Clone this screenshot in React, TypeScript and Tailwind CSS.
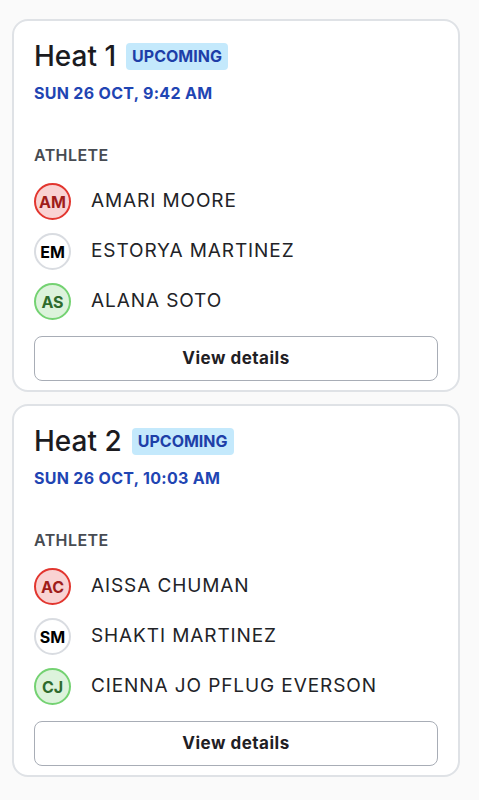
type Tone = "red" | "plain" | "green";

type Athlete = { initials: string; name: string; tone: Tone };

type Heat = { title: string; date: string; athletes: Athlete[] };

const heats: Heat[] = [
  {
    title: "Heat 1",
    date: "SUN 26 OCT, 9:42 AM",
    athletes: [
      { initials: "AM", name: "AMARI MOORE", tone: "red" },
      { initials: "EM", name: "ESTORYA MARTINEZ", tone: "plain" },
      { initials: "AS", name: "ALANA SOTO", tone: "green" },
    ],
  },
  {
    title: "Heat 2",
    date: "SUN 26 OCT, 10:03 AM",
    athletes: [
      { initials: "AC", name: "AISSA CHUMAN", tone: "red" },
      { initials: "SM", name: "SHAKTI MARTINEZ", tone: "plain" },
      { initials: "CJ", name: "CIENNA JO PFLUG EVERSON", tone: "green" },
    ],
  },
];

const toneClass: Record<Tone, string> = {
  red: "bg-[#f9d3d3] border-[#e2362f] text-[#9f1d1a]",
  plain: "bg-white border-[#d9dce1] text-black",
  green: "bg-[#ddf3dc] border-[#74d272] text-[#2f6b2d]",
};

function Avatar({ initials, tone }: { initials: string; tone: Tone }) {
  return (
    <div
      className={`w-[37px] h-[37px] shrink-0 rounded-full border-2 flex items-center justify-center text-[16px] font-bold ${toneClass[tone]}`}
    >
      {initials}
    </div>
  );
}

function HeatCard({ heat }: { heat: Heat }) {
  return (
    <div className="bg-white border-2 border-[#dfe2e6] rounded-[16px] px-[20px] pt-[21px] pb-[9px]">
      {/* Title + status */}
      <div className="flex items-center gap-[10px]">
        <h2 className="text-[28px] leading-[28px] font-medium text-[#1b1b1f]">
          {heat.title}
        </h2>
        <span className="bg-[#c4e9fc] text-[#1e3fa8] text-[16px] leading-[27px] font-bold px-[6px] rounded-[4px]">
          UPCOMING
        </span>
      </div>
      <div className="mt-[13px] text-[16px] leading-[20px] font-bold text-[#1f45b3] tracking-[0.3px]">
        {heat.date}
      </div>

      {/* Athletes */}
      <div className="mt-[43px] text-[16px] leading-[18px] font-semibold text-[#474b52] tracking-[0.4px]">
        ATHLETE
      </div>
      <div className="mt-[19px] flex flex-col gap-[13px]">
        {heat.athletes.map((a) => (
          <div key={a.name} className="flex items-center gap-[20px]">
            <Avatar initials={a.initials} tone={a.tone} />
            <span className="text-[19px] text-[#222327] tracking-[0.9px]">{a.name}</span>
          </div>
        ))}
      </div>

      <button className="mt-[16px] w-full h-[45px] border border-[#a8adb6] rounded-[8px] text-[17px] font-bold text-[#1f2024] tracking-[0.5px]">
        View details
      </button>
    </div>
  );
}

export default function App() {
  return (
    <div
      className="min-h-[800px] bg-[#fafafa] pt-[19px] pl-[12px] pr-[19px] pb-6"
      style={{ fontFamily: "Inter, 'Noto Sans', sans-serif" }}
    >
      <div className="flex flex-col gap-[12px]">
        {heats.map((h) => (
          <HeatCard key={h.title} heat={h} />
        ))}
      </div>
    </div>
  );
}
